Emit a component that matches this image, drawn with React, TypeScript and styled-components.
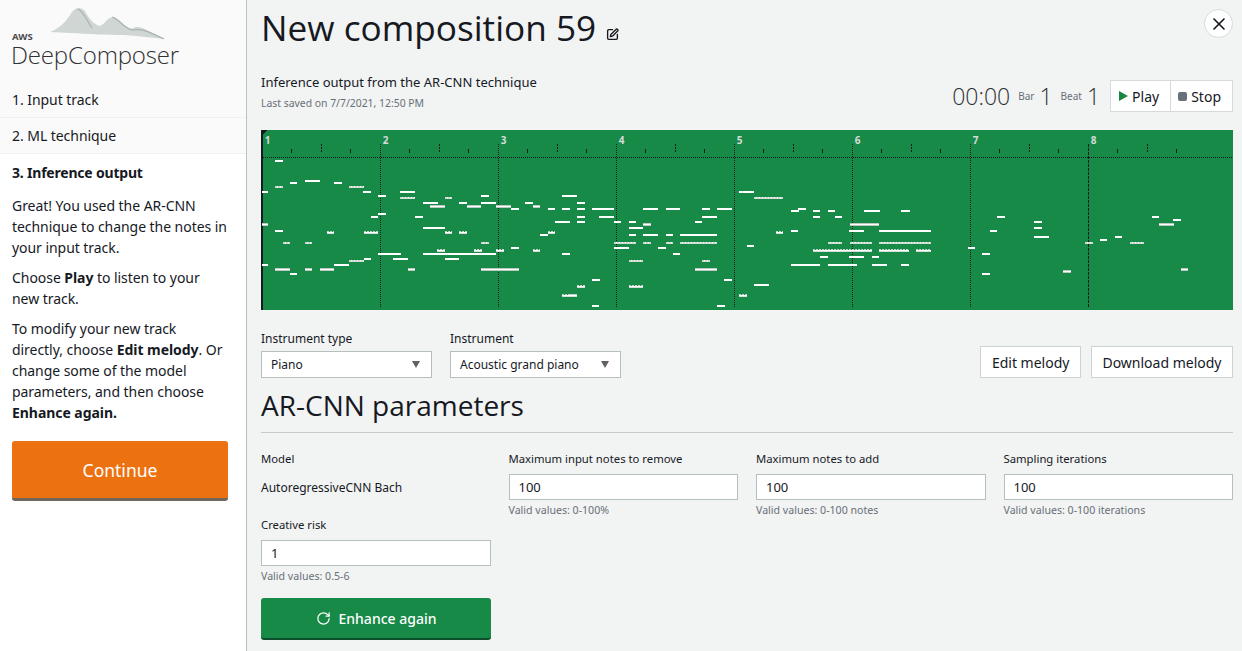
import styled, { createGlobalStyle } from "styled-components";
import { RotateCw, SquarePen, X } from "lucide-react";

type Note = [number, number, number];

// note positions: [start, end, row], measured in the piano roll's 3x viewBox
const NOTES_A: Note[] = [
  [36, 54, 201], [76, 98, 109], [76, 98, 187], [120, 141, 174], [165, 209, 168], [252, 275, 174],
  [297, 341, 187], [340, 362, 201], [384, 408, 213], [450, 494, 201], [450, 494, 220], [519, 563, 234],
  [540, 584, 244], [584, 606, 220], [627, 651, 234], [651, 694, 244], [694, 717, 213], [694, 738, 234],
  [738, 783, 244], [783, 806, 252], [826, 849, 234], [849, 870, 244], [894, 915, 252], [937, 960, 252],
  [937, 981, 213], [36, 54, 298], [76, 98, 318], [98, 120, 355], [165, 186, 355], [230, 252, 323],
  [341, 384, 323], [363, 384, 276], [384, 408, 267], [495, 519, 276], [519, 584, 309], [584, 606, 323],
  [627, 651, 323], [694, 717, 355], [870, 894, 330], [894, 915, 323], [915, 960, 291], [36, 54, 420],
  [76, 120, 434], [120, 141, 447], [165, 186, 434], [209, 252, 434], [252, 297, 420], [297, 341, 409],
  [341, 362, 402], [384, 452, 387], [430, 473, 402], [473, 495, 434], [519, 738, 387], [562, 584, 377],
  [584, 627, 402], [673, 695, 377], [694, 806, 434], [738, 762, 377], [783, 806, 369], [849, 870, 377],
  [937, 960, 387], [937, 981, 512],
];

const NOTES_B: Note[] = [
  [0, 21, 213], [21, 45, 234], [21, 45, 252], [66, 132, 252], [21, 45, 276], [87, 132, 276], [21, 45, 291],
  [132, 153, 291], [177, 199, 291], [177, 220, 309], [220, 242, 299], [220, 264, 252], [288, 331, 252],
  [396, 420, 252], [441, 486, 252], [396, 441, 276], [375, 396, 291], [177, 199, 330], [220, 264, 330],
  [288, 309, 330], [331, 441, 330], [132, 199, 355], [220, 242, 355], [288, 309, 355], [331, 441, 355],
  [132, 177, 369], [264, 288, 369], [309, 331, 387], [177, 220, 409], [396, 420, 409], [375, 441, 434],
  [66, 89, 465], [462, 486, 465], [21, 45, 485], [177, 220, 485], [0, 21, 512], [66, 87, 544], [441, 464, 544],
  [507, 552, 201], [552, 639, 220], [618, 639, 323], [531, 552, 363], [552, 597, 480], [507, 531, 512],
  [663, 687, 258], [684, 707, 252], [728, 750, 258], [774, 795, 258], [728, 750, 276], [795, 817, 276],
  [882, 929, 258], [993, 1020, 258], [839, 928, 299], [663, 685, 318], [838, 882, 318], [927, 1020, 318],
  [774, 817, 355], [839, 906, 355], [927, 1020, 355], [728, 906, 377], [927, 1017, 377], [750, 774, 396],
  [838, 882, 396], [906, 928, 396], [663, 750, 420], [774, 860, 420], [906, 950, 420], [993, 1017, 420],
];

const NOTES_C: Note[] = [
  [3, 27, 258], [0, 93, 318], [0, 93, 355], [0, 27, 377], [48, 93, 377], [3, 27, 420], [203, 225, 369],
  [246, 270, 387], [246, 270, 447], [270, 291, 318], [291, 314, 276], [402, 425, 291], [402, 425, 309],
  [402, 446, 336], [489, 513, 441], [555, 578, 355], [600, 621, 345], [645, 667, 336], [689, 732, 355],
  [756, 777, 276], [777, 821, 299], [820, 843, 285], [843, 864, 434],
];

const SOFT_ROWS = [244, 298, 299, 434, 441];
const HATCHED_ROWS = [187, 220, 323, 355, 377, 409, 485, 512];
const BARS = [1, 2, 3, 4, 5, 6, 7, 8];
const BAR_WIDTH = 354;
const BAR_START = 3;

const GlobalStyle = createGlobalStyle`
  html, body {
    margin: 0;
    height: 651px;
    overflow: hidden;
    background: #f2f3f3;
    font-family: "Noto Sans", "Open Sans", sans-serif;
    color: #16191f;
  }
`;

const Page = styled.div`
  display: flex;
  width: 1242px;
  height: 651px;
  overflow: hidden;
`;

const Sidebar = styled.aside`
  width: 246px;
  flex: none;
  background: #fff;
  border-right: 1px solid #b9c0c0;
  display: flex;
  flex-direction: column;
`;

const LogoArea = styled.div`
  height: 82px;
  background: #fafafa;
  position: relative;
`;

const LogoWave = styled.svg`
  position: absolute;
  left: 40px;
  top: 6px;
`;

const LogoAws = styled.span`
  position: absolute;
  left: 12px;
  top: 31px;
  font-size: 9.5px;
  line-height: 11px;
  font-weight: 700;
  color: #4a4a4a;
`;

const LogoName = styled.span`
  position: absolute;
  left: 11px;
  top: 38px;
  font-family: "Open Sans", sans-serif;
  font-size: 24px;
  line-height: 34px;
  font-weight: 300;
  letter-spacing: -0.15px;
  color: #2f3132;
`;

const Step = styled.div<{ $active?: boolean }>`
  height: 36px;
  padding-left: 12px;
  display: flex;
  align-items: center;
  box-sizing: border-box;
  font-size: 14px;
  letter-spacing: ${(p) => (p.$active ? "-0.2px" : "-0.05px")};
  font-weight: ${(p) => (p.$active ? 700 : 400)};
  background: ${(p) => (p.$active ? "#fff" : "#fafafa")};
  border-bottom: ${(p) => (p.$active ? "none" : "1px solid #f0f0f0")};
`;

const SideText = styled.div`
  padding: 5px 16px 0 12px;
  font-size: 14px;
  line-height: 21px;
  letter-spacing: -0.05px;
`;

const SidePara = styled.p`
  margin: 0 0 9px;
`;

const ContinueButton = styled.button`
  margin: 9px 18px 0 12px;
  height: 60px;
  background: #ec7211;
  border: none;
  border-bottom: 3px solid #6f665c;
  border-radius: 3px;
  color: #fff;
  font: 400 17.5px "Noto Sans", sans-serif;
`;

const Main = styled.main`
  flex: 1;
  min-width: 0;
  padding: 0 9px 0 14px;
  position: relative;
`;

const TitleRow = styled.div`
  height: 74px;
  display: flex;
  align-items: flex-start;
  gap: 10px;
`;

const Title = styled.h1`
  margin: 4px 0 0;
  font-family: "Open Sans", sans-serif;
  font-size: 35.2px;
  line-height: 46px;
  font-weight: 400;
  color: #16191f;
`;

const EditIcon = styled(SquarePen)`
  margin-top: 28px;
`;

const CloseButton = styled.button`
  position: absolute;
  right: 9px;
  top: 9px;
  width: 29px;
  height: 29px;
  padding: 0;
  display: flex;
  align-items: center;
  justify-content: center;
  border-radius: 50%;
  background: #fff;
  border: 1px solid #d5dbdb;
  color: #16191f;
`;

const OutputRow = styled.div`
  height: 56px;
  display: flex;
  justify-content: space-between;
`;

const OutputTitle = styled.div`
  font-size: 13px;
  line-height: 16px;
`;

const SavedAt = styled.div`
  margin-top: 6px;
  font-size: 10.4px;
  line-height: 14px;
  color: #687078;
`;

const Transport = styled.div`
  display: flex;
  align-items: center;
  height: 32px;
  margin-top: 6px;
`;

const BigValue = styled.span`
  font-family: "Open Sans", sans-serif;
  font-size: 23px;
  font-weight: 300;
  color: #2f3132;
`;

const SmallLabel = styled.span`
  margin: 0 5px 0 8px;
  font-size: 10px;
  color: #687078;
`;

const ButtonGroup = styled.div`
  display: flex;
  margin-left: 10px;
  background: #fff;
  border: 1px solid #d5dbdb;
  height: 30px;
`;

const TransportButton = styled.button`
  display: flex;
  align-items: center;
  gap: 4px;
  padding: 0 11px 0 7px;
  background: none;
  border: none;
  font: 14px "Noto Sans", sans-serif;
  color: #16191f;
  & + & {
    border-left: 1px solid #d5dbdb;
  }
`;

const PlayGlyph = styled.i`
  width: 0;
  height: 0;
  margin-left: 1px;
  border-left: 9px solid #16873f;
  border-top: 5px solid transparent;
  border-bottom: 5px solid transparent;
`;

const StopGlyph = styled.i`
  width: 9px;
  height: 9px;
  border-radius: 2px;
  background: #687078;
`;

const Roll = styled.svg`
  display: block;
  width: 972px;
  height: 180px;
  background: #168a46;
`;

const BarNumber = styled.text`
  font: 700 30px "Noto Sans", sans-serif;
  fill: #d5dbdb;
`;

const ControlsRow = styled.div`
  margin-top: 21px;
  display: flex;
  align-items: flex-end;
  gap: 18px;
`;

const FieldLabel = styled.div`
  font-size: 12px;
  line-height: 16px;
  margin-bottom: 4px;
`;

const ParamLabel = styled.div`
  font-size: 11.3px;
  line-height: 16px;
  margin-bottom: 7px;
`;

const SelectBox = styled.div`
  width: 171px;
  height: 27px;
  box-sizing: border-box;
  padding: 0 11px 0 9px;
  display: flex;
  align-items: center;
  justify-content: space-between;
  background: #fff;
  border: 1px solid #b6bfbf;
  font-size: 12px;
`;

const Caret = styled.i`
  width: 0;
  height: 0;
  border-top: 7px solid #5f6263;
  border-left: 4.5px solid transparent;
  border-right: 4.5px solid transparent;
`;

const ActionGroup = styled.div`
  margin-left: auto;
  display: flex;
  gap: 10px;
`;

const ActionButton = styled.button`
  height: 32px;
  padding: 0 10.5px;
  background: #fff;
  border: 1px solid #cdd3d3;
  font: 14px "Noto Sans", sans-serif;
  color: #16191f;
`;

const SectionTitle = styled.h2`
  margin: 9px 0 0;
  padding-bottom: 9px;
  border-bottom: 1px solid #c6cccc;
  font-family: "Open Sans", sans-serif;
  font-size: 28px;
  line-height: 36px;
  font-weight: 400;
`;

const ParamGrid = styled.div`
  margin-top: 18px;
  display: grid;
  grid-template-columns: repeat(4, 229.5px);
  column-gap: 18px;
`;

const Param = styled.div``;

const ModelName = styled.div`
  margin-top: 13px;
  font-size: 12px;
  line-height: 16px;
`;

const NumberInput = styled.input`
  display: block;
  width: 100%;
  height: 26px;
  box-sizing: border-box;
  padding: 0 9px;
  background: #fff;
  border: 1px solid #b6bfbf;
  font: 13px "Noto Sans", sans-serif;
  color: #16191f;
`;

const Hint = styled.div`
  margin-top: 4px;
  font-size: 10.6px;
  line-height: 13px;
  color: #687078;
`;

const EnhanceButton = styled.button`
  width: 230px;
  height: 42px;
  margin-top: 15px;
  display: flex;
  align-items: center;
  justify-content: center;
  gap: 8px;
  background: #168a46;
  border: none;
  border-bottom: 2px solid #0d4f2a;
  border-radius: 3px;
  color: #fff;
  font: 500 14px "Noto Sans", sans-serif;
`;

const NoteGroup = ({ notes, shift }: { notes: Note[]; shift: number }) => (
  <g transform={`translate(${shift} -15)`}>
    {notes.map(([from, to, row]) => {
      const width = to - from;
      if (SOFT_ROWS.includes(row)) {
        return (
          <g key={`${from}-${row}`}>
            <rect x={from} y={row - 5} width={width} height={9} fill="#bcc9c0" />
            <rect x={from} y={row - 2} width={width} height={3} fill="#fff" />
          </g>
        );
      }
      if (HATCHED_ROWS.includes(row)) {
        return (
          <g key={`${from}-${row}`}>
            <rect x={from} y={row - 3} width={width} height={3} fill="#fff" />
            <rect x={from} y={row} width={width} height={3} fill="#d5ddd8" />
            <line x1={from} x2={to} y1={row - 4} y2={row - 4} stroke="#c4d3c9" strokeWidth={3} strokeDasharray="6 3" />
          </g>
        );
      }
      return <rect key={`${from}-${row}`} x={from} y={row - 3} width={width} height={6} fill="#fff" />;
    })}
  </g>
);

const PianoRoll = () => (
  <Roll viewBox="0 0 2916 540" shapeRendering="crispEdges">
    <rect x={0} y={0} width={6} height={540} fill="#16191f" />
    <path d="M0 0h18l-18 18z" fill="#16191f" />
    {BARS.map((bar, i) => (
      <g key={bar}>
        <BarNumber x={BAR_START + i * BAR_WIDTH + 8} y={41}>
          {bar}
        </BarNumber>
        {i > 0 && (
          <line
            x1={BAR_START + i * BAR_WIDTH}
            x2={BAR_START + i * BAR_WIDTH}
            y1={42}
            y2={534}
            stroke="#16191f"
            strokeWidth={3}
            strokeDasharray={i === 7 ? "9 3" : "3 3"}
          />
        )}
        {[1, 2, 3].map((beat) => {
          const x = BAR_START + i * BAR_WIDTH + beat * 88.5;
          return (
            <line
              key={beat}
              x1={x}
              x2={x}
              y1={beat === 2 ? 42 : 57}
              y2={68}
              stroke="#16191f"
              strokeWidth={3}
              strokeDasharray={beat === 2 ? "6 3" : undefined}
            />
          );
        })}
      </g>
    ))}
    <line x1={0} x2={2916} y1={81} y2={81} stroke="#16191f" strokeWidth={3} strokeDasharray="3 3" />
    <NoteGroup notes={NOTES_A} shift={-33} />
    <NoteGroup notes={NOTES_B} shift={927} />
    <NoteGroup notes={NOTES_C} shift={1917} />
  </Roll>
);

const Logo = () => (
  <LogoArea>
    <LogoWave width="130" height="36" viewBox="0 0 130 36">
      <path
        d="M10 26C20 22 26 16 32 6C36 1 40 1 44 4C48 10 52 18 60 20C65 18 68 11 73 11C80 11 84 24 92 23C96 20 100 21 105 23C112 27 118 30 124 33C110 31 96 30 84 29C70 29 50 28 30 27Z"
        fill="#cfd6d3"
      />
      <path
        d="M38 3C44 6 47 15 52 22M72 11C80 13 84 24 94 24C102 22 114 28 124 33"
        stroke="#a9b4b0"
        strokeWidth="1.2"
        fill="none"
      />
    </LogoWave>
    <LogoAws>AWS</LogoAws>
    <LogoName>DeepComposer</LogoName>
  </LogoArea>
);

const App = () => {
  return (
    <Page>
      <GlobalStyle />
      <Sidebar>
        <Logo />
        <Step>1. Input track</Step>
        <Step>2. ML technique</Step>
        <Step $active>3. Inference output</Step>
        <SideText>
          <SidePara>Great! You used the AR-CNN technique to change the notes in your input track.</SidePara>
          <SidePara>
            Choose <b>Play</b> to listen to your new track.
          </SidePara>
          <SidePara>
            To modify your new track directly, choose <b>Edit melody</b>. Or change some of the model parameters, and
            then choose <b>Enhance again.</b>
          </SidePara>
        </SideText>
        <ContinueButton>Continue</ContinueButton>
      </Sidebar>
      <Main>
        <TitleRow>
          <Title>New composition 59</Title>
          <EditIcon size={13} strokeWidth={2.5} />
        </TitleRow>
        <CloseButton aria-label="Close">
          <X size={20} strokeWidth={2} />
        </CloseButton>
        <OutputRow>
          <div>
            <OutputTitle>Inference output from the AR-CNN technique</OutputTitle>
            <SavedAt>Last saved on 7/7/2021, 12:50 PM</SavedAt>
          </div>
          <Transport>
            <BigValue>00:00</BigValue>
            <SmallLabel>Bar</SmallLabel>
            <BigValue>1</BigValue>
            <SmallLabel>Beat</SmallLabel>
            <BigValue>1</BigValue>
            <ButtonGroup>
              <TransportButton>
                <PlayGlyph />
                Play
              </TransportButton>
              <TransportButton>
                <StopGlyph />
                Stop
              </TransportButton>
            </ButtonGroup>
          </Transport>
        </OutputRow>
        <PianoRoll />
        <ControlsRow>
          <div>
            <FieldLabel>Instrument type</FieldLabel>
            <SelectBox>
              Piano
              <Caret />
            </SelectBox>
          </div>
          <div>
            <FieldLabel>Instrument</FieldLabel>
            <SelectBox>
              Acoustic grand piano
              <Caret />
            </SelectBox>
          </div>
          <ActionGroup>
            <ActionButton>Edit melody</ActionButton>
            <ActionButton>Download melody</ActionButton>
          </ActionGroup>
        </ControlsRow>
        <SectionTitle>AR-CNN parameters</SectionTitle>
        <ParamGrid>
          <Param>
            <ParamLabel>Model</ParamLabel>
            <ModelName>AutoregressiveCNN Bach</ModelName>
          </Param>
          <Param>
            <ParamLabel>Maximum input notes to remove</ParamLabel>
            <NumberInput defaultValue="100" />
            <Hint>Valid values: 0-100%</Hint>
          </Param>
          <Param>
            <ParamLabel>Maximum notes to add</ParamLabel>
            <NumberInput defaultValue="100" />
            <Hint>Valid values: 0-100 notes</Hint>
          </Param>
          <Param>
            <ParamLabel>Sampling iterations</ParamLabel>
            <NumberInput defaultValue="100" />
            <Hint>Valid values: 0-100 iterations</Hint>
          </Param>
          <Param>
            <ParamLabel>Creative risk</ParamLabel>
            <NumberInput defaultValue="1" />
            <Hint>Valid values: 0.5-6</Hint>
            <EnhanceButton>
              <RotateCw size={15} strokeWidth={2} />
              Enhance again
            </EnhanceButton>
          </Param>
        </ParamGrid>
      </Main>
    </Page>
  );
};

export default App;
